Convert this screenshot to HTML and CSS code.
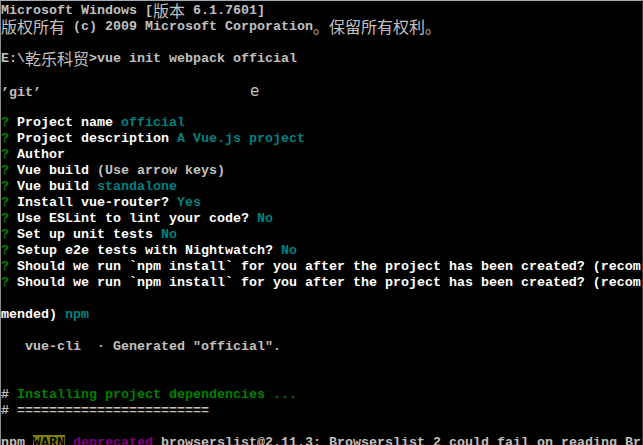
FILE: index.html
```html
<!DOCTYPE html>
<html>
<head>
<meta charset="utf-8">
<link rel="stylesheet" href="styles.css">
</head>
<body>
<div class="console">
<div class="row">Microsoft Windows [<span class="cjk">版本</span> 6.1.7601]</div>
<div class="row"><span class="cjk">版权所有</span> (c) 2009 Microsoft Corporation<span class="cjk">。保留所有权利。</span></div>
<div class="row"></div>
<div class="row">E:\<span class="cjk">乾乐科贸</span>&gt;vue init webpack official</div>
<div class="row"></div>
<div class="row">’git’                          <span class="thin">e</span></div>
<div class="row"></div>
<div class="row"><span class="g">?</span> <span class="w">Project name</span> <span class="c">official</span></div>
<div class="row"><span class="g">?</span> <span class="w">Project description</span> <span class="c">A Vue.js project</span></div>
<div class="row"><span class="g">?</span> <span class="w">Author</span></div>
<div class="row"><span class="g">?</span> <span class="w">Vue build</span> (Use arrow keys)</div>
<div class="row"><span class="g">?</span> <span class="w">Vue build</span> <span class="c">standalone</span></div>
<div class="row"><span class="g">?</span> <span class="w">Install vue-router?</span> <span class="c">Yes</span></div>
<div class="row"><span class="g">?</span> <span class="w">Use ESLint to lint your code?</span> <span class="c">No</span></div>
<div class="row"><span class="g">?</span> <span class="w">Set up unit tests</span> <span class="c">No</span></div>
<div class="row"><span class="g">?</span> <span class="w">Setup e2e tests with Nightwatch?</span> <span class="c">No</span></div>
<div class="row"><span class="g">?</span> <span class="w">Should we run `npm install` for you after the project has been created? (recom</span></div>
<div class="row"><span class="g">?</span> <span class="w">Should we run `npm install` for you after the project has been created? (recom</span></div>
<div class="row"></div>
<div class="row"><span class="w">mended)</span> <span class="c">npm</span></div>
<div class="row"></div>
<div class="row">   vue-cli  · Generated "official".</div>
<div class="row"></div>
<div class="row"></div>
<div class="row">#<span class="g"> Installing project dependencies ...</span></div>
<div class="row"># ========================</div>
<div class="row"></div>
<div class="row">npm <span class="warn">WARN</span> <span class="m">deprecated</span> browserslist@2.11.3: Browserslist 2 could fail on reading Br</div>
</div>
</body>
</html>
```
FILE: styles.css
```css
html, body {
  margin: 0;
  padding: 0;
  background: #000;
  overflow: hidden;
}
.console {
  width: 641px;
  height: 443px;
  border-top: 1px solid #a3abb4;
  border-left: 1px solid #8c8c8c;
  border-right: 1px solid #3a3a3a;
  background: #000;
  color: #c0c0c0;
  font-family: "Liberation Mono", "DejaVu Sans Mono", monospace;
  font-weight: bold;
  font-size: 13.3333px;
  overflow: hidden;
  padding-top: 1px;
  box-sizing: content-box;
}
.row {
  height: 16px;
  line-height: 16px;
  padding-top: 1px;
  margin-bottom: -1px;
  white-space: pre;
  width: 640px;
}
.cjk {
  display: inline-block;
  vertical-align: top;
  height: 16px;
  margin-top: -1px;
  font-family: "Noto Sans CJK SC", sans-serif;
  font-weight: normal;
  font-size: 16px;
  line-height: 16px;
}
.thin {
  font-family: "DejaVu Sans", sans-serif;
  font-weight: normal;
  font-size: 15px;
  margin-left: 1px;
}
.w { color: #ffffff; }
.g { color: #008000; }
.c { color: #008080; }
.m { color: #800080; }
.warn {
  background: #808000;
  color: #000;
}
```
